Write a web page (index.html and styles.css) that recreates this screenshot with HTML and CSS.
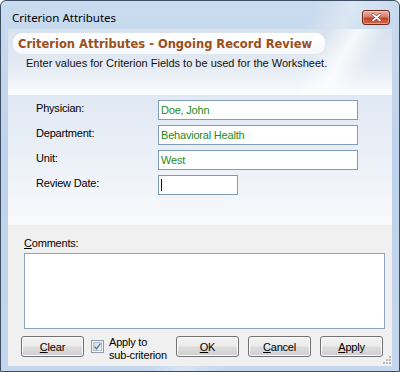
FILE: index.html
```html
<!DOCTYPE html>
<html lang="en">
<head>
    <meta charset="UTF-8">
    <title>Criterion Attributes</title>
    <link rel="stylesheet" href="styles.css">
</head>
<body>
    <div class="window">
        <div class="titlebar">
            <span class="title">Criterion Attributes</span>
            <button class="close">
                <svg width="11" height="9" viewBox="0 0 11 9">
                    <path d="M2 1.5 L9 7.5 M9 1.5 L2 7.5" stroke="#7a2a1c" stroke-width="2.6" stroke-linecap="round"/>
                    <path d="M2 1.5 L9 7.5 M9 1.5 L2 7.5" stroke="#fff" stroke-width="1.8" stroke-linecap="round"/>
                </svg>
            </button>
        </div>

        <div class="client">
            <div class="header">
                <div class="banner">Criterion Attributes - Ongoing Record Review</div>
                <p class="intro">Enter values for Criterion Fields to be used for the Worksheet.</p>
            </div>

            <div class="fields">
                <div class="row"><label>Physician:</label><div class="box wide">Doe, John</div></div>
                <div class="row"><label>Department:</label><div class="box wide">Behavioral Health</div></div>
                <div class="row"><label>Unit:</label><div class="box wide">West</div></div>
                <div class="row"><label>Review Date:</label><div class="box short"><span class="caret"></span></div></div>
            </div>

            <div class="bottom">
                <div class="comments-label"><u>C</u>omments:</div>
                <div class="comments"></div>
                <div class="buttons">
                    <button class="btn"><u>C</u>lear</button>
                    <div class="apply-opt">
                        <svg class="check" width="13" height="13" viewBox="0 0 13 13">
                            <defs>
                                <linearGradient id="cb" x1="0" y1="0" x2="1" y2="1">
                                    <stop offset="0" stop-color="#cdd7e3"/>
                                    <stop offset="1" stop-color="#f3f6f9"/>
                                </linearGradient>
                            </defs>
                            <rect x="0.5" y="0.5" width="12" height="12" fill="#f6f7f9" stroke="#8e9aab"/>
                            <rect x="2.5" y="2.5" width="8" height="8" fill="url(#cb)" stroke="#b3bfcd"/>
                            <path d="M3.6 6.6 L5.6 8.8 L9.4 3.6" fill="none" stroke="#5f7fa8" stroke-width="1.5"/>
                        </svg>
                        <span class="opt-text">Apply to<br>sub-criterion</span>
                    </div>
                    <button class="btn"><u>O</u>K</button>
                    <button class="btn gap"><u>C</u>ancel</button>
                    <button class="btn gap"><u>A</u>pply</button>
                </div>
                <svg class="grip" width="9" height="9" viewBox="0 0 9 9">
                    <g fill="#b9b9b9">
                        <rect x="7" y="1" width="2" height="2"/>
                        <rect x="4" y="4" width="2" height="2"/>
                        <rect x="7" y="4" width="2" height="2"/>
                        <rect x="1" y="7" width="2" height="2"/>
                        <rect x="4" y="7" width="2" height="2"/>
                        <rect x="7" y="7" width="2" height="2"/>
                    </g>
                </svg>
            </div>
        </div>
    </div>
</body>
</html>
```

FILE: styles.css
```css
body {
    margin: 0;
    font-family: "Liberation Sans", Arial, sans-serif;
    font-size: 11px;
    color: #000;
}

.window {
    width: 400px;
    height: 372px;
    box-sizing: border-box;
    border: 1px solid #3c4e63;
    border-radius: 6px 6px 0 0;
    padding: 0 7px 5px;
    display: flex;
    flex-direction: column;
    background:
        linear-gradient(115deg, rgba(255,255,255,0) 55%, rgba(255,255,255,.35) 62%, rgba(255,255,255,0) 70%),
        linear-gradient(to bottom, #c9dbee, #bfd3ea 40%, #c3d6ec);
}

.titlebar {
    height: 28px;
    box-sizing: border-box;
    padding: 4px 2px 0 4px;
    display: flex;
    align-items: center;
}

.title {
    flex: 1;
    font-family: "Noto Sans", sans-serif;
    font-size: 11.5px;
}

.close {
    width: 28px;
    height: 15px;
    box-sizing: border-box;
    padding: 0;
    margin-top: 1px;
    border: 1px solid #6d2a1d;
    border-radius: 3px;
    display: flex;
    align-items: center;
    justify-content: center;
    background: linear-gradient(to bottom, #eab0a0 0%, #d5806a 45%, #c2432a 55%, #d4694a 100%);
    box-shadow: inset 0 0 0 1px rgba(255,255,255,.35);
}

.client {
    flex: 1;
    position: relative;
    display: flex;
    flex-direction: column;
    background: #f0f0f0;
}

/* header with the title pill */
.header {
    height: 66px;
    box-sizing: border-box;
    padding: 4px 0 0 5px;
    background:
        linear-gradient(120deg, rgba(255,255,255,0) 76%, rgba(255,255,255,.75) 83%, rgba(255,255,255,0) 90%),
        linear-gradient(to bottom, #d8e2ee 0%, #e3eaf3 55%, #fbfcfe 100%);
}

.banner {
    width: 312px;
    height: 21px;
    box-sizing: border-box;
    padding-left: 5px;
    border-radius: 9px;
    background: linear-gradient(to bottom, #fff, #f6f8fb);
    display: flex;
    align-items: center;
    font-family: "DejaVu Sans", sans-serif;
    font-weight: bold;
    font-size: 11.5px;
    color: #9b4f1a;
}

.intro {
    margin: 2px 0 0 13px;
    line-height: 14px;
    color: #111;
}

.fields {
    height: 130px;
    box-sizing: border-box;
    padding: 5px 0 0 28px;
    display: flex;
    flex-direction: column;
    gap: 5px;
    background: linear-gradient(to bottom, #e0e8f3, #f8f9fc);
}

.row {
    display: flex;
    height: 20px;
}

.row label {
    width: 122px;
    line-height: 14px;
    padding-top: 1px;
    letter-spacing: -0.2px;
}

.box {
    height: 20px;
    box-sizing: border-box;
    border: 1px solid #7f9db9;
    background: #fff;
    padding-left: 2px;
    line-height: 18px;
    color: #238a23;
    letter-spacing: -0.2px;
}

.wide {
    width: 200px;
}

.short {
    width: 80px;
    display: flex;
    align-items: center;
}

.caret {
    width: 1px;
    height: 12px;
    background: #000;
}

.bottom {
    flex: 1;
    padding: 11px 7px 0 16px;
}

.comments-label {
    line-height: 14px;
    letter-spacing: -0.2px;
}

.comments {
    margin-top: 3px;
    height: 76px;
    box-sizing: border-box;
    border: 1px solid #8ea3bd;
    background: #fff;
}

.buttons {
    display: flex;
    align-items: flex-start;
    margin: 7px 0 0 -3px;
}

.btn {
    width: 63px;
    height: 21px;
    box-sizing: border-box;
    padding: 0;
    border: 1px solid #707070;
    border-radius: 3px;
    background: linear-gradient(to bottom, #f3f3f3 0%, #ebebeb 48%, #dddddd 52%, #cfcfcf 100%);
    box-shadow: inset 0 0 0 1px #fbfbfb;
    font-family: "Liberation Sans", Arial, sans-serif;
    font-size: 11px;
    letter-spacing: -0.2px;
    color: #000;
}

.btn.gap {
    margin-left: 9px;
}

.apply-opt {
    width: 85px;
    margin-left: 7px;
    display: flex;
    align-items: flex-start;
}

.check {
    margin-top: 4px;
    flex: none;
}

.opt-text {
    margin: 0 0 0 5px;
    line-height: 13px;
    letter-spacing: -0.2px;
}

.grip {
    position: absolute;
    right: 1px;
    bottom: 2px;
}
```
